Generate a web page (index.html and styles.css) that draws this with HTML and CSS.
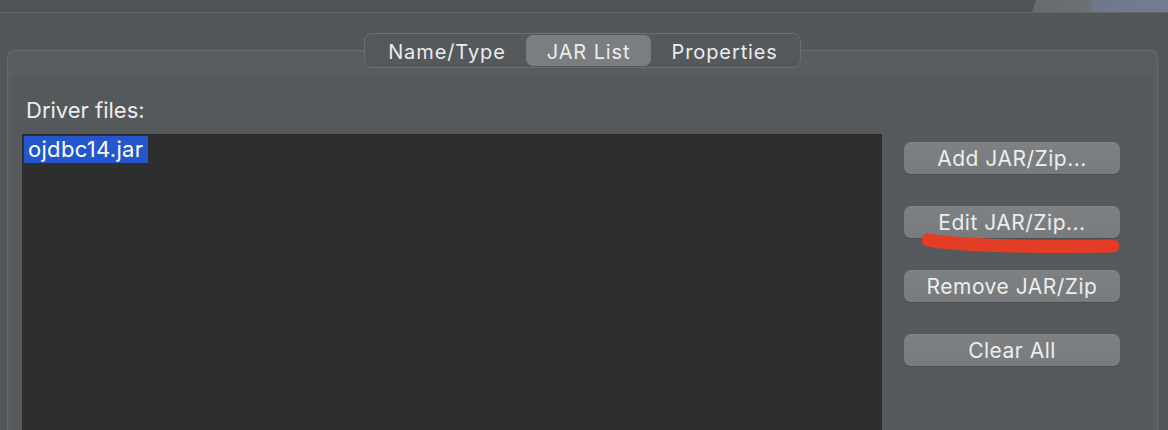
FILE: index.html
```html
<!DOCTYPE html>
<html lang="en">

<head>
    <meta charset="UTF-8">
    <meta name="viewport" content="width=device-width, initial-scale=1.0">
    <title>Driver | JAR List</title>
    <link rel="stylesheet" href="styles.css">
</head>

<body>
    <div class="topbar">
        <div class="backwin"></div>
    </div>

    <div class="main">
        <div class="tabs">
            <div class="tab">Name/Type</div>
            <div class="tab selected">JAR List</div>
            <div class="tab">Properties</div>
        </div>

        <div class="group">
            <div class="panel">
                <div class="label">Driver files:</div>
                <div class="row">
                    <div class="list">
                        <div class="item selected">ojdbc14.jar</div>
                    </div>
                    <div class="buttons">
                        <button class="btn">Add JAR/Zip...</button>
                        <button class="btn">Edit JAR/Zip...</button>
                        <button class="btn">Remove JAR/Zip</button>
                        <button class="btn">Clear All</button>
                        <!-- red marker stroke drawn over the screenshot -->
                        <svg class="mark" width="216" height="140" viewBox="0 0 216 140">
                            <path d="M24 106 Q 70 114 209 112" fill="none" stroke="#e43d26"
                                stroke-width="13" stroke-linecap="round" />
                        </svg>
                    </div>
                </div>
            </div>
        </div>
    </div>
</body>

</html>
```

FILE: styles.css
```css
html,
body {
    margin: 0;
    height: 100%;
    overflow: hidden;
}

body {
    background-color: #53575a;
    font-family: Inter, "Liberation Sans", sans-serif;
    color: #ececec;
}

.topbar {
    height: 12px;
    background-color: #505457;
    border-bottom: 1px solid #616568;
    display: flex;
    justify-content: flex-end;
}

.backwin {
    width: 136px;
    background: linear-gradient(90deg, #676b71 0, #6b6f76 56px, #6f778b 62px, #737d92 100%);
    clip-path: polygon(4px 0, 100% 0, 100% 100%, 0 100%);
}

.main {
    padding: 20px 10px 0 7px;
}

.tabs {
    position: relative;
    z-index: 1;
    display: flex;
    width: fit-content;
    margin: 0 auto;
    padding: 1px 2px;
    height: 31px;
    border: 1px solid #6a6e71;
    border-radius: 8px;
    background-color: #55595c;
}

.tab {
    display: flex;
    align-items: center;
    padding: 2px 20px 0 21px;
    font-size: 20px;
    letter-spacing: 0.9px;
    border-radius: 7px;
}

.tab.selected {
    background-color: #7b7e80;
}

.group {
    margin-top: -18px;
    height: 400px;
    border: 1px solid #686c6f;
    border-bottom: none;
    border-radius: 8px 8px 0 0;
    background-color: #595d60;
    padding: 25px 5px 0 4px;
}

.panel {
    height: 100%;
    background-color: #55595c;
    padding: 0 32px 0 10px;
}

.label {
    padding: 21px 0 0 4px;
    line-height: 26px;
    margin-bottom: 11px;
    font-size: 22px;
}

.row {
    display: flex;
    gap: 22px;
    height: 300px;
}

.list {
    flex: 1;
    background-color: #2e2e2e;
    border-top: 1px solid #272727;
    padding: 1px 2px;
}

.item {
    display: inline-block;
    height: 27px;
    line-height: 27px;
    padding: 0 5px 0 4px;
    font-size: 22px;
    letter-spacing: 0.3px;
    color: #fff;
}

.item.selected {
    background-color: #2457cc;
}

.buttons {
    position: relative;
    width: 216px;
    display: flex;
    flex-direction: column;
    gap: 32px;
    padding-top: 8px;
}

.btn {
    height: 32px;
    border: none;
    border-radius: 7px;
    background: linear-gradient(180deg, #7e8183, #787b7d);
    box-shadow: 0 1px 0 #4b4f52;
    color: #ededed;
    font-family: Inter, "Liberation Sans", sans-serif;
    font-size: 21px;
    letter-spacing: 0.5px;
    padding: 0;
}

.mark {
    position: absolute;
    top: 0;
    left: 0;
}
```
